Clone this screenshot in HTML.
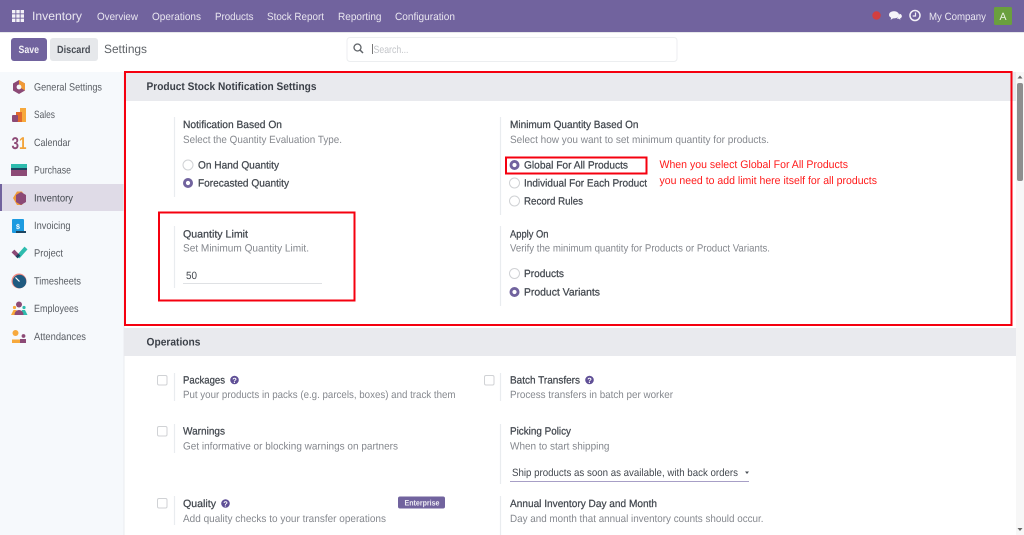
<!DOCTYPE html>
<html><head><meta charset="utf-8"><title>Inventory Settings</title>
<style>
html,body{margin:0;padding:0;background:#fff;overflow:hidden}
svg{display:block;font-family:"Liberation Sans",sans-serif;filter:blur(.3px)}
text{white-space:pre;text-rendering:geometricPrecision}
.n{fill:#e9e6f0;font-size:10.500px}
.s{fill:#5a5e64;font-size:10.500px}
.t{fill:#43484f;font-size:10.500px;stroke:#43484f;stroke-width:.25}
.d{fill:#85888e;font-size:10.500px}
.h{fill:#3a3f47;font-size:11px;font-weight:bold}
.r{fill:#ff1a1a;font-size:11px}
.l{stroke:#e9ecef;stroke-width:1.200}
.o{fill:#fff;stroke:#d0d2d5;stroke-width:1}
.c{fill:#fff;stroke:#d0d2d5;stroke-width:1}
</style></head><body>
<svg width="1024" height="535" viewBox="0 0 1024 535" xmlns="http://www.w3.org/2000/svg">
<defs>
<g id="q"><circle r="4.300" fill="#5f4f96"/><text x="0" y="2.800" text-anchor="middle" font-size="7.500" font-weight="bold" fill="#fff">?</text></g>
<g id="sel"><circle r="5" fill="#71639e"/><circle r="2.100" fill="#fff"/></g>
</defs>
<rect width="1024" height="535" fill="#fff"/>
<!-- navbar -->
<rect width="1024" height="32" fill="#71639e"/>
<rect y="32" width="1024" height="1" fill="#e6e7ea"/>
<g fill="#f3f1f7">
<rect x="12" y="10" width="3.400" height="3.400"/><rect x="16.300" y="10" width="3.400" height="3.400"/><rect x="20.600" y="10" width="3.400" height="3.400"/>
<rect x="12" y="14.300" width="3.400" height="3.400"/><rect x="16.300" y="14.300" width="3.400" height="3.400"/><rect x="20.600" y="14.300" width="3.400" height="3.400"/>
<rect x="12" y="18.600" width="3.400" height="3.400"/><rect x="16.300" y="18.600" width="3.400" height="3.400"/><rect x="20.600" y="18.600" width="3.400" height="3.400"/>
</g>
<text x="32" y="20" class="n" style="font-size:12px" textLength="50" lengthAdjust="spacingAndGlyphs">Inventory</text>
<text x="97" y="20" class="n" textLength="41" lengthAdjust="spacingAndGlyphs">Overview</text>
<text x="152" y="20" class="n" textLength="49" lengthAdjust="spacingAndGlyphs">Operations</text>
<text x="215" y="20" class="n" textLength="38.500" lengthAdjust="spacingAndGlyphs">Products</text>
<text x="267" y="20" class="n" textLength="57" lengthAdjust="spacingAndGlyphs">Stock Report</text>
<text x="338" y="20" class="n" textLength="43.500" lengthAdjust="spacingAndGlyphs">Reporting</text>
<text x="395" y="20" class="n" textLength="60" lengthAdjust="spacingAndGlyphs">Configuration</text>
<circle cx="876.500" cy="15.500" r="4.200" fill="#d23f3f"/>
<path d="M889 15c0-2.800 2.500-3.800 5-3.800s5 1.300 5 3.600-2.400 3.600-5 3.600l-1 0-2.400 1.500.6-2.200c-1.400-.6-2.200-1.700-2.200-2.700z" fill="#f6f4f9"/>
<path d="M899.800 13.500c1.500.5 2.300 1.600 2.300 2.700 0 1-.7 1.900-1.800 2.400l.5 1.700-2-1.300-2 0" fill="#f6f4f9" stroke="#71639e" stroke-width=".5"/>
<circle cx="915" cy="15.500" r="5" fill="none" stroke="#f3f1f7" stroke-width="1.500"/>
<path d="M915.500 12.500v3.500h-2.800" fill="none" stroke="#f3f1f7" stroke-width="1.200"/>
<text x="929" y="20" class="n" textLength="57" lengthAdjust="spacingAndGlyphs">My Company</text>
<rect x="994" y="7" width="18" height="18" rx="1.500" fill="#6a9f3e"/>
<text x="1003" y="20" text-anchor="middle" font-size="10.500" fill="#eef4e6">A</text>
<!-- control panel -->
<rect x="11" y="38" width="36" height="23" rx="3" fill="#71639e"/>
<text x="18.500" y="53" font-size="10.500" font-weight="bold" fill="#f2f0f6" textLength="20.500" lengthAdjust="spacingAndGlyphs">Save</text>
<rect x="50" y="38" width="48" height="23" rx="3" fill="#e6e8eb"/>
<text x="57" y="53" font-size="10.500" font-weight="bold" fill="#4a4f57" textLength="33.500" lengthAdjust="spacingAndGlyphs">Discard</text>
<text x="104" y="53" font-size="12" fill="#5f6368" textLength="43" lengthAdjust="spacingAndGlyphs">Settings</text>
<rect x="347" y="37.500" width="330" height="24" rx="3" fill="#fff" stroke="#eceef0"/>
<circle cx="357.500" cy="47.500" r="3.500" fill="none" stroke="#5f6368" stroke-width="1.300"/>
<path d="M360 50l3 3" stroke="#5f6368" stroke-width="1.500"/>
<rect x="372" y="44" width="1" height="10" fill="#777"/>
<text x="373.500" y="53" class="d" style="fill:#c3c5c9" textLength="35" lengthAdjust="spacingAndGlyphs">Search...</text>
<!-- sidebar -->
<rect x="0" y="72" width="124" height="463" fill="#f6f9fc"/>
<rect x="0" y="184" width="124" height="27" fill="#dfdbe7"/>
<rect x="0" y="184" width="2" height="27" fill="#71639e"/>
<rect x="123.500" y="72" width="1" height="463" fill="#e9ecef"/>
<!-- sidebar icons -->
<path d="M19 80l6 3.500v7l-6 3.500-6-3.500v-7z" fill="#8c4a76"/><path d="M19 80l6 3.500v7l-6-3.500z" fill="#f09a37"/><circle cx="19" cy="87" r="2.400" fill="#f6f9fc"/>
<rect x="20" y="108" width="6" height="14" fill="#f7a93c"/><rect x="16" y="112" width="6" height="10" fill="#e26a2c"/><rect x="12" y="115" width="6" height="7" rx="1" fill="#8c4a76"/>
<text x="11.500" y="149" font-size="17" font-weight="bold" fill="#f2a43a" textLength="15" lengthAdjust="spacingAndGlyphs"><tspan fill="#8c4a76">3</tspan>1</text>
<rect x="11" y="164" width="16" height="4" fill="#2ebcae"/><rect x="11" y="168" width="16" height="2" fill="#1d4560"/><rect x="11" y="170" width="16" height="6" fill="#8c4a76"/>
<path d="M17 191.500l5 0 4 6.500-4 7-5 0-4-7z" fill="#f09a37"/><path d="M21 192l5 3v7l-5 3-5-3v-7z" fill="#8c4a76"/>
<rect x="12" y="219" width="12" height="14" rx="1" fill="#1d9be0"/><rect x="16" y="231" width="10" height="2" fill="#1d4560"/><text x="18" y="229" text-anchor="middle" font-size="7" font-weight="bold" fill="#fff">$</text>
<path d="M18 257l8-9" stroke="#2ebcae" stroke-width="4"/><path d="M13 251l5 5" stroke="#8c4a76" stroke-width="4"/><path d="M17 255l2 2" stroke="#1d4560" stroke-width="4"/>
<circle cx="19" cy="281" r="7.500" fill="#f28b82"/><circle cx="19.500" cy="281.500" r="6.800" fill="#1f5a80"/><path d="M19.500 281.500l-4-4" stroke="#fff" stroke-width="1.200"/>
<circle cx="19" cy="304.500" r="3" fill="#8c4a76"/><path d="M11 315l2.500-5h3l1 5z" fill="#f7a93c"/><path d="M21 315l1-5h3l2.500 5z" fill="#2ebcae"/><path d="M14.500 315c0-3 2-5 4.500-5s4.500 2 4.500 5z" fill="#8c4a76"/><circle cx="14.500" cy="307.500" r="1.600" fill="#f7a93c"/><circle cx="24" cy="307.500" r="1.600" fill="#2ebcae"/>
<circle cx="15.500" cy="333" r="3" fill="#f7a93c"/><circle cx="23.500" cy="336" r="1.900" fill="#8c4a76"/><path d="M12 343v-3.500h9v3.500z" fill="#f7a93c"/><path d="M20 343v-4h6v4z" fill="#8c4a76"/>
<text x="34" y="90.500" class="s" textLength="68" lengthAdjust="spacingAndGlyphs">General Settings</text>
<text x="34" y="118" class="s" textLength="21" lengthAdjust="spacingAndGlyphs">Sales</text>
<text x="34" y="146" class="s" textLength="36.500" lengthAdjust="spacingAndGlyphs">Calendar</text>
<text x="34" y="173.500" class="s" textLength="37" lengthAdjust="spacingAndGlyphs">Purchase</text>
<text x="34" y="201.500" class="s" style="fill:#43484f" textLength="39" lengthAdjust="spacingAndGlyphs">Inventory</text>
<text x="34" y="229" class="s" textLength="36.500" lengthAdjust="spacingAndGlyphs">Invoicing</text>
<text x="34" y="256.500" class="s" textLength="29" lengthAdjust="spacingAndGlyphs">Project</text>
<text x="34" y="284.500" class="s" textLength="47" lengthAdjust="spacingAndGlyphs">Timesheets</text>
<text x="34" y="312" class="s" textLength="44.500" lengthAdjust="spacingAndGlyphs">Employees</text>
<text x="34" y="340" class="s" textLength="52" lengthAdjust="spacingAndGlyphs">Attendances</text>
<!-- section headers -->
<rect x="124" y="72" width="892" height="29" fill="#e9eaee"/>
<rect x="124" y="328" width="892" height="28" fill="#e9eaee"/>
<text x="146.500" y="90" class="h" textLength="170" lengthAdjust="spacingAndGlyphs">Product Stock Notification Settings</text>
<text x="146.500" y="345.500" class="h" textLength="54" lengthAdjust="spacingAndGlyphs">Operations</text>
<!-- separators -->
<path class="l" d="M174.500 117V197M500.500 117V215M174.500 226V288M500.500 226V306M174.500 373V401M500.500 373V401M174.500 424V453M500.500 424V484M174.500 496V525M500.500 496V535"/>
<!-- notification settings -->
<text x="183" y="128" class="t" textLength="99" lengthAdjust="spacingAndGlyphs">Notification Based On</text>
<text x="183" y="143" class="d" textLength="159" lengthAdjust="spacingAndGlyphs">Select the Quantity Evaluation Type.</text>
<circle class="o" cx="188" cy="165" r="5"/>
<text x="198" y="168.500" class="t" textLength="81" lengthAdjust="spacingAndGlyphs">On Hand Quantity</text>
<use href="#sel" x="188" y="183"/>
<text x="198" y="186.500" class="t" textLength="91" lengthAdjust="spacingAndGlyphs">Forecasted Quantity</text>
<text x="510" y="128" class="t" textLength="128.500" lengthAdjust="spacingAndGlyphs">Minimum Quantity Based On</text>
<text x="510" y="143" class="d" textLength="259" lengthAdjust="spacingAndGlyphs">Select how you want to set minimum quantity for products.</text>
<use href="#sel" x="514.500" y="165"/>
<text x="524" y="168.500" class="t" textLength="104" lengthAdjust="spacingAndGlyphs">Global For All Products</text>
<circle class="o" cx="514.500" cy="183" r="5"/>
<text x="524" y="186.500" class="t" textLength="123" lengthAdjust="spacingAndGlyphs">Individual For Each Product</text>
<circle class="o" cx="514.500" cy="201" r="5"/>
<text x="524" y="204.500" class="t" textLength="59" lengthAdjust="spacingAndGlyphs">Record Rules</text>
<text x="659.500" y="168" class="r" textLength="188.500" lengthAdjust="spacingAndGlyphs">When you select Global For All Products</text>
<text x="659.500" y="184" class="r" textLength="217.500" lengthAdjust="spacingAndGlyphs">you need to add limit here itself for all products</text>
<text x="183" y="237.500" class="t" textLength="65" lengthAdjust="spacingAndGlyphs">Quantity Limit</text>
<text x="183" y="251.500" class="d" textLength="126" lengthAdjust="spacingAndGlyphs">Set Minimum Quantity Limit.</text>
<text x="186" y="279" class="t" style="stroke:none" textLength="11" lengthAdjust="spacingAndGlyphs">50</text>
<rect x="183" y="283" width="139" height="1" fill="#dfe1e4"/>
<text x="510" y="237.500" class="t" textLength="38.500" lengthAdjust="spacingAndGlyphs">Apply On</text>
<text x="510" y="251.500" class="d" textLength="260" lengthAdjust="spacingAndGlyphs">Verify the minimum quantity for Products or Product Variants.</text>
<circle class="o" cx="514.500" cy="273.500" r="5"/>
<text x="524" y="277" class="t" textLength="40" lengthAdjust="spacingAndGlyphs">Products</text>
<use href="#sel" x="514.500" y="292"/>
<text x="524" y="295.500" class="t" textLength="76" lengthAdjust="spacingAndGlyphs">Product Variants</text>
<!-- operations -->
<rect class="c" x="157.500" y="375.500" width="9.500" height="9.500" rx="1.500"/>
<text x="183" y="383.500" class="t" textLength="42" lengthAdjust="spacingAndGlyphs">Packages</text>
<use href="#q" x="234.500" y="380"/>
<text x="183" y="398" class="d" textLength="272.500" lengthAdjust="spacingAndGlyphs">Put your products in packs (e.g. parcels, boxes) and track them</text>
<rect class="c" x="484.500" y="375.500" width="9.500" height="9.500" rx="1.500"/>
<text x="510" y="383.500" class="t" textLength="70" lengthAdjust="spacingAndGlyphs">Batch Transfers</text>
<use href="#q" x="589.500" y="380"/>
<text x="510" y="398" class="d" textLength="163" lengthAdjust="spacingAndGlyphs">Process transfers in batch per worker</text>
<rect class="c" x="157.500" y="426.500" width="9.500" height="9.500" rx="1.500"/>
<text x="183" y="434.500" class="t" textLength="42" lengthAdjust="spacingAndGlyphs">Warnings</text>
<text x="183" y="449.500" class="d" textLength="215" lengthAdjust="spacingAndGlyphs">Get informative or blocking warnings on partners</text>
<text x="510" y="434.500" class="t" textLength="61" lengthAdjust="spacingAndGlyphs">Picking Policy</text>
<text x="510" y="449.500" class="d" textLength="99.500" lengthAdjust="spacingAndGlyphs">When to start shipping</text>
<text x="512" y="476" class="t" style="stroke:none" textLength="226" lengthAdjust="spacingAndGlyphs">Ship products as soon as available, with back orders</text>
<path d="M745 471.500h4l-2 2.500z" fill="#4a4f57"/>
<rect x="510" y="481" width="239" height="1" fill="#a79fc6"/>
<rect class="c" x="157.500" y="498.500" width="9.500" height="9.500" rx="1.500"/>
<text x="183" y="507" class="t" textLength="33" lengthAdjust="spacingAndGlyphs">Quality</text>
<use href="#q" x="225.500" y="503.500"/>
<rect x="398" y="496.500" width="47" height="12" rx="2" fill="#71639e"/>
<text x="404.500" y="505.500" font-size="8" font-weight="bold" fill="#eeecf4" textLength="35" lengthAdjust="spacingAndGlyphs">Enterprise</text>
<text x="183" y="522" class="d" textLength="203" lengthAdjust="spacingAndGlyphs">Add quality checks to your transfer operations</text>
<text x="510" y="507" class="t" textLength="147" lengthAdjust="spacingAndGlyphs">Annual Inventory Day and Month</text>
<text x="510" y="522" class="d" textLength="253.500" lengthAdjust="spacingAndGlyphs">Day and month that annual inventory counts should occur.</text>
<!-- annotations -->
<g fill="none" stroke="#f5000f" stroke-width="2">
<rect x="125" y="72" width="886.500" height="253"/>
<rect x="506" y="157.500" width="140.500" height="16"/>
<rect x="159" y="212.500" width="195.500" height="88"/>
</g>
<!-- scrollbar -->
<rect x="1016" y="72" width="8" height="463" fill="#f7f7f7"/>
<rect x="1017" y="83" width="6" height="98" rx="2" fill="#8e8e8e"/>
<path d="M1020 75.500l2.500 3h-5z" fill="#666"/>
<path d="M1020 531l2.500-3h-5z" fill="#666"/>
</svg>
</body></html>
